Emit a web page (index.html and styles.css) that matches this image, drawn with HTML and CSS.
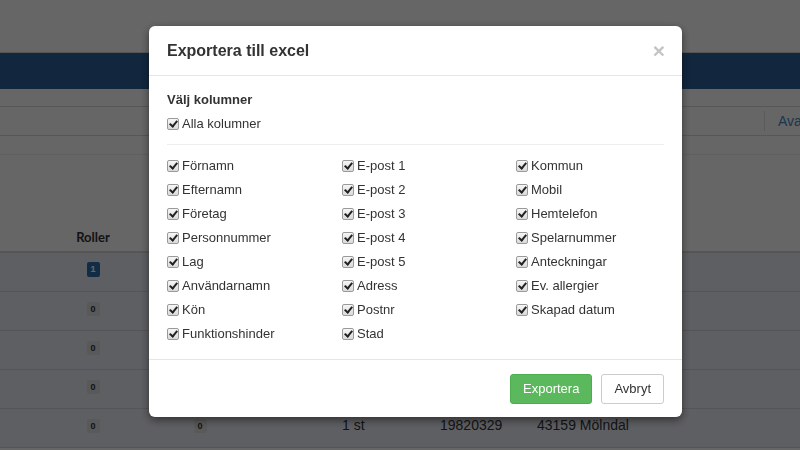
FILE: index.html
```html
<!DOCTYPE html>
<html lang="sv">
<head>
    <meta charset="UTF-8">
    <meta name="viewport" content="width=device-width, initial-scale=1.0">
    <title>Medlemmar</title>
    <link rel="stylesheet" href="styles.css">
</head>
<body>
    <div class="page">
        <div class="page__top"></div>
        <div class="page__nav"></div>
        <div class="page__sub"></div>
        <div class="page__tools">
            <span class="page__sep"></span>
            <a href="###" class="page__link">Avancerad sökning</a>
        </div>
        <div class="page__filter"></div>
        <div class="page__space"></div>
        <div class="grid">
            <div class="grid__head">
                <span></span><span class="grid__th">Roller</span>
            </div>
            <div class="grid__row">
                <span></span><span class="grid__c"><b class="badge badge--blue">1</b></span>
            </div>
            <div class="grid__row">
                <span></span><span class="grid__c"><b class="badge">0</b></span>
            </div>
            <div class="grid__row">
                <span></span><span class="grid__c"><b class="badge">0</b></span>
            </div>
            <div class="grid__row">
                <span></span><span class="grid__c"><b class="badge">0</b></span>
            </div>
            <div class="grid__row">
                <span></span><span class="grid__c"><b class="badge">0</b></span>
                <span class="grid__c"><b class="badge">0</b></span>
                <span></span>
                <span class="grid__t">1 st</span>
                <span class="grid__t">19820329</span>
                <span class="grid__t">43159 Mölndal</span>
            </div>
        </div>
    </div>

    <div class="backdrop"></div>

    <div class="modal-wrap">
        <div class="modal">
            <div class="modal__header">
                <span class="modal__close">&times;</span>
                <h4 class="modal__title">Exportera till excel</h4>
            </div>
            <div class="modal__body">
                <h5 class="modal__label">Välj kolumner</h5>
                <label class="check"><input type="checkbox" checked> Alla kolumner</label>
                <hr class="modal__hr">
                <div class="cols">
                    <label class="check"><input type="checkbox" checked> Förnamn</label>
                    <label class="check"><input type="checkbox" checked> E-post 1</label>
                    <label class="check"><input type="checkbox" checked> Kommun</label>
                    <label class="check"><input type="checkbox" checked> Efternamn</label>
                    <label class="check"><input type="checkbox" checked> E-post 2</label>
                    <label class="check"><input type="checkbox" checked> Mobil</label>
                    <label class="check"><input type="checkbox" checked> Företag</label>
                    <label class="check"><input type="checkbox" checked> E-post 3</label>
                    <label class="check"><input type="checkbox" checked> Hemtelefon</label>
                    <label class="check"><input type="checkbox" checked> Personnummer</label>
                    <label class="check"><input type="checkbox" checked> E-post 4</label>
                    <label class="check"><input type="checkbox" checked> Spelarnummer</label>
                    <label class="check"><input type="checkbox" checked> Lag</label>
                    <label class="check"><input type="checkbox" checked> E-post 5</label>
                    <label class="check"><input type="checkbox" checked> Anteckningar</label>
                    <label class="check"><input type="checkbox" checked> Användarnamn</label>
                    <label class="check"><input type="checkbox" checked> Adress</label>
                    <label class="check"><input type="checkbox" checked> Ev. allergier</label>
                    <label class="check"><input type="checkbox" checked> Kön</label>
                    <label class="check"><input type="checkbox" checked> Postnr</label>
                    <label class="check"><input type="checkbox" checked> Skapad datum</label>
                    <label class="check"><input type="checkbox" checked> Funktionshinder</label>
                    <label class="check"><input type="checkbox" checked> Stad</label>
                </div>
            </div>
            <div class="modal__footer">
                <a href="###" class="btn btn--green">Exportera</a>
                <a href="###" class="btn">Avbryt</a>
            </div>
        </div>
    </div>
</body>
</html>
```

FILE: styles.css
```css
html, body {
    margin: 0;
    height: 100%;
    overflow: hidden;
}
body {
    font: 13px/1.5 "Liberation Sans", Arial, sans-serif;
    color: #333;
    background: #fff;
}

/* page behind the dialog */
.page__top {
    height: 52px;
    border-bottom: 1px solid #d6d6d6;
}
.page__nav {
    height: 36px;
    background: #2d6198;
}
.page__sub {
    height: 17px;
    border-bottom: 1px solid #d9d9d9;
}
.page__tools {
    height: 28px;
    border-bottom: 1px solid #d9d9d9;
    display: flex;
    align-items: center;
    justify-content: flex-end;
    white-space: nowrap;
    overflow: hidden;
}
.page__sep {
    width: 1px;
    height: 20px;
    background: #e2e2e2;
    margin-right: 13px;
    flex: none;
}
.page__link {
    font-size: 14px;
    color: #4a86c5;
    text-decoration: none;
    flex: none;
    width: 22px;
    overflow: hidden;
}
.page__filter {
    height: 18px;
    border-bottom: 1px solid #eeeeee;
}
.page__space {
    height: 67px;
}
.grid__head,
.grid__row {
    display: grid;
    grid-template-columns: 56px 74px 140px 64px 98px 97px 1fr;
}
.grid__head {
    height: 29px;
    border-bottom: 2px solid #d5d5d5;
    align-items: center;
}
.grid__th {
    font: bold 13px Lato, sans-serif;
    color: #333;
    text-align: center;
}
.grid__row {
    height: 32px;
    padding-top: 6px;
    line-height: 20px;
    background: #ebedf6;
    border-bottom: 1px solid #d4d4d8;
}
.grid__c {
    text-align: center;
}
.grid__t {
    padding-left: 8px;
    font-size: 14px;
    color: #333;
}
.badge {
    display: inline-block;
    min-width: 7px;
    padding: 0 3px;
    line-height: 14px;
    font-size: 9px;
    background: #dedede;
    color: #333;
    border-radius: 2px;
    vertical-align: middle;
}
.badge--blue {
    background: #2f6fb0;
    color: #fff;
    line-height: 15px;
    padding: 0 3px;
}

.backdrop {
    position: fixed;
    inset: 0;
    background: #000;
    opacity: .6;
}

/* dialog */
.modal-wrap {
    position: fixed;
    inset: 0;
    padding: 26px 0 0 149px;
}
.modal {
    width: 533px;
    background: #fff;
    border-radius: 6px;
    box-shadow: 0 3px 9px rgba(0, 0, 0, .5);
}
.modal__header {
    padding: 15px 18px;
    border-bottom: 1px solid #e5e5e5;
}
.modal__title {
    margin: 0;
    font-size: 16px;
    line-height: 19px;
    font-weight: bold;
    color: #333;
}
.modal__close {
    float: right;
    font-size: 21px;
    font-weight: bold;
    line-height: 19px;
    color: #c4c4c4;
    margin-right: -1px;
}
.modal__body {
    padding: 14px 18px 13px;
}
.modal__label {
    margin: 0 0 4px;
    font-size: 13px;
    line-height: 20px;
    font-weight: bold;
}
.modal__hr {
    margin: 10px 0 9px;
    border: 0;
    border-top: 1px solid #eeeeee;
}
.cols {
    display: grid;
    grid-template-columns: 175px 174px 1fr;
}
.cols .check {
    line-height: 24px;
}
.check {
    display: flex;
    align-items: center;
    line-height: 20px;
    white-space: nowrap;
}
.check input {
    -webkit-appearance: none;
    appearance: none;
    position: relative;
    width: 12px;
    height: 12px;
    margin: 0 3px 0 0;
    border: 1px solid #9a9a9a;
    border-radius: 2px;
    background: linear-gradient(to bottom, #f6f6f6, #dadada);
    box-sizing: border-box;
    flex: none;
}
.check input:checked::after {
    content: "";
    position: absolute;
    left: 3px;
    top: 0;
    width: 3px;
    height: 6px;
    border: solid #222;
    border-width: 0 2px 2px 0;
    transform: rotate(40deg);
}
.modal__footer {
    padding: 14px 18px 13px;
    border-top: 1px solid #e5e5e5;
    display: flex;
    justify-content: flex-end;
    gap: 9px;
}
.btn {
    display: block;
    height: 30px;
    line-height: 28px;
    padding: 0 12px;
    box-sizing: border-box;
    border: 1px solid #ccc;
    border-radius: 3px;
    background: #fff;
    color: #333;
    text-decoration: none;
    font-size: 13px;
}
.btn--green {
    background: #5cb85c;
    border-color: #4cae4c;
    color: #fff;
}
```
